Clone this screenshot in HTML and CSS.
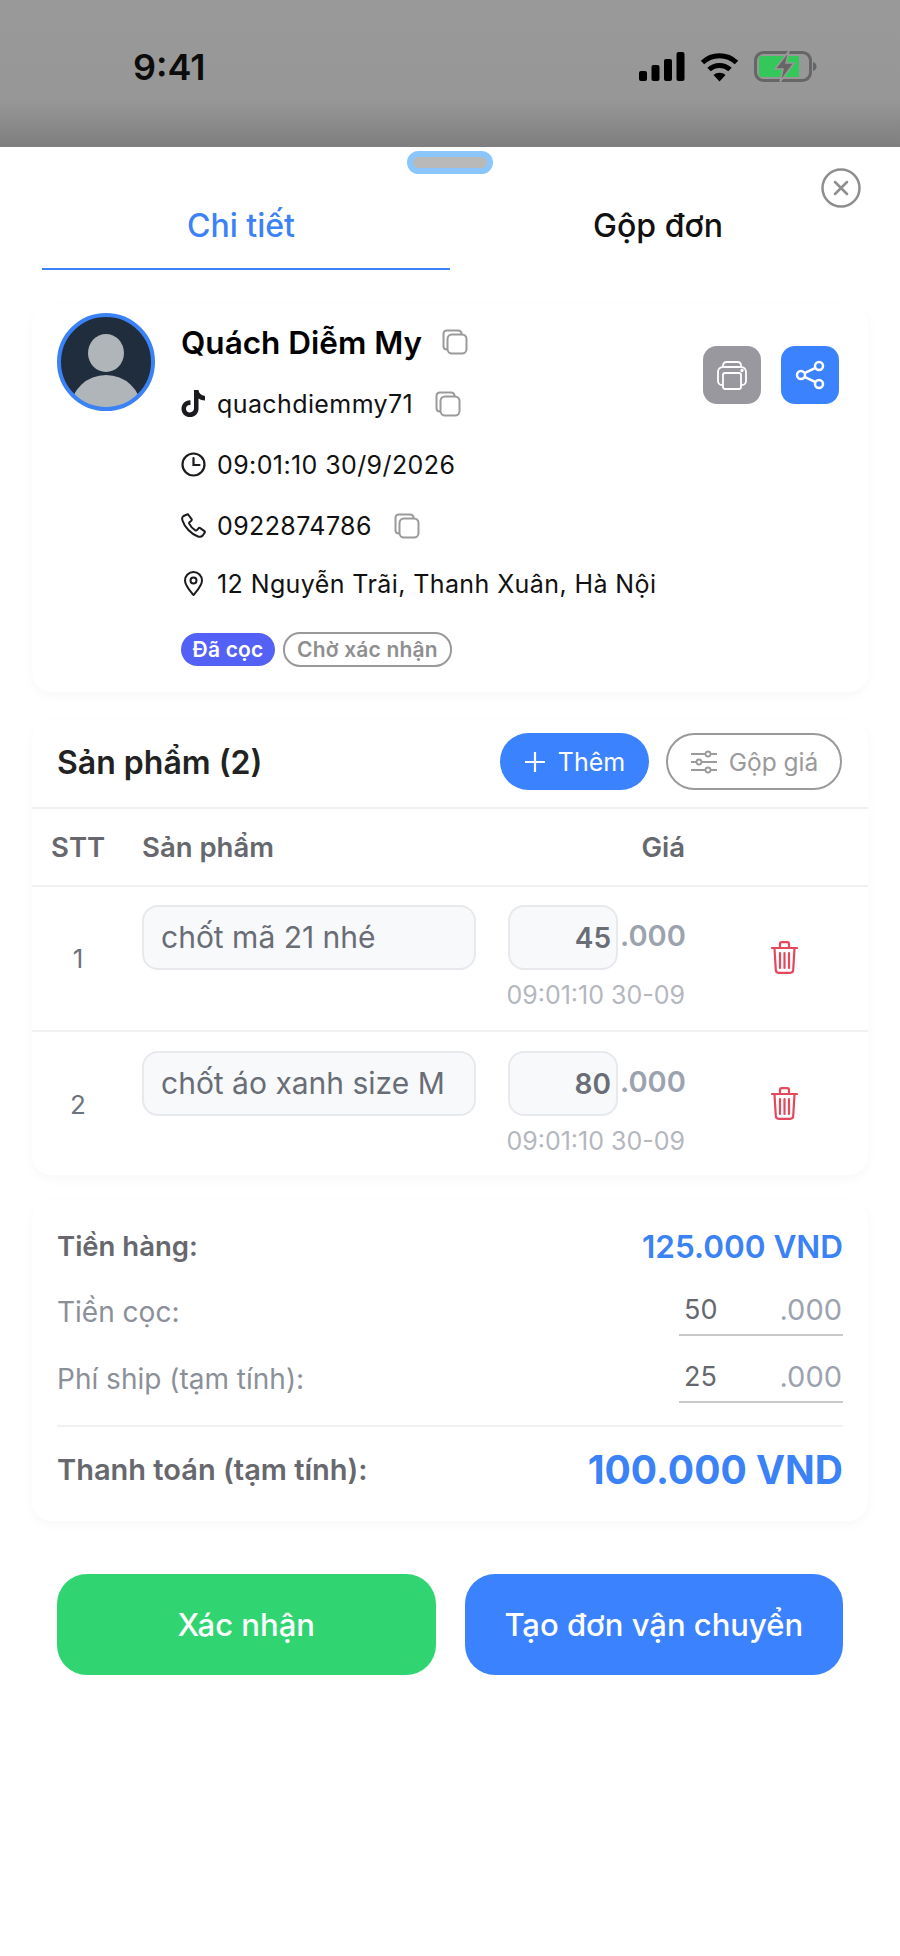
FILE: index.html
```html
<!DOCTYPE html>
<html lang="vi">
<head>
    <meta charset="UTF-8">
    <meta name="viewport" content="width=device-width, initial-scale=1.0">
    <title>Chi tiết đơn</title>
    <link rel="stylesheet" href="styles.css">
</head>

<body>
    <svg class="defs" width="0" height="0">
        <symbol id="copy" viewBox="0 0 26 26">
            <path d="M5 20.5c-2 0-3.500-1.500-3.500-3.500V5C1.500 3 3 1.500 5 1.500h11c2 0 3.500 1.500 3.500 3.500" fill="none" stroke="currentColor" stroke-width="2"/>
            <rect x="5.500" y="5.500" width="19" height="19" rx="4.500" fill="#fff" stroke="currentColor" stroke-width="2"/>
        </symbol>
        <symbol id="trash" viewBox="0 0 27 33">
            <path d="M1 7h25M9 6.500V3c0-1 .8-1.800 1.800-1.800h5.400C17.200 1.200 18 2 18 3v3.500M3.500 7.500l1.300 21.500c.1 1.700 1.300 2.800 3 2.800h11.400c1.700 0 2.900-1.100 3-2.800l1.300-21.500M9 12v15M13.500 12v15M18 12v15" fill="none" stroke="currentColor" stroke-width="2.200" stroke-linecap="round"/>
        </symbol>
    </svg>

    <div class="status_bar">
        <span class="clock">9:41</span>
        <div class="status_icons">
            <svg width="46" height="29" viewBox="0 0 46 29" fill="#000">
                <rect x="0" y="19" width="8" height="10" rx="2"/>
                <rect x="12.500" y="13" width="8" height="16" rx="2"/>
                <rect x="25" y="7" width="8" height="22" rx="2"/>
                <rect x="37.500" y="0" width="8" height="29" rx="2"/>
            </svg>
            <svg width="39" height="30" viewBox="0 0 39 30" fill="none" stroke="#000" stroke-width="5">
                <path d="M2.500 10.500c9.500-9 24.500-9 34 0"/>
                <path d="M9 17.500c6-5.500 15-5.500 21 0"/>
                <path d="M19.500 29.500l-6-6.500c3.400-3 8.600-3 12 0z" fill="#000" stroke="none"/>
            </svg>
            <svg width="63" height="31" viewBox="0 0 63 31">
                <rect x="1.500" y="1.500" width="55" height="28" rx="8" fill="none" stroke="#666" stroke-width="3"/>
                <path d="M8 5h37v21H8a3 3 0 0 1-3-3V8a3 3 0 0 1 3-3z" fill="#34c759"/>
                <path d="M59 11c2.500.5 3.500 2.500 3.500 4.500S61.500 19.500 59 20z" fill="#666"/>
                <path d="M35 0L21 18h8l-3 13 14-19h-8z" fill="#666" stroke="#999" stroke-width="1.500"/>
            </svg>
        </div>
    </div>

    <div class="sheet">
        <div class="handle"></div>
        <svg class="close_btn" width="40" height="40" viewBox="0 0 40 40" fill="none" stroke="#8e8e8e" stroke-width="2.500">
            <circle cx="20" cy="20" r="18.500"/>
            <path d="M14 14l12 12M26 14L14 26" stroke-linecap="round"/>
        </svg>

        <div class="tabs">
            <div class="tab active">Chi tiết</div>
            <div class="tab">Gộp đơn</div>
        </div>

        <div class="card customer">
            <svg class="avatar" width="98" height="98" viewBox="0 0 98 98">
                <clipPath id="avatarClip"><circle cx="49" cy="49" r="47"/></clipPath>
                <circle cx="49" cy="49" r="47" fill="#1f2d3d"/>
                <g clip-path="url(#avatarClip)" fill="#b0b5ba">
                    <ellipse cx="49" cy="40" rx="18" ry="19"/>
                    <ellipse cx="49" cy="95" rx="35" ry="33"/>
                </g>
                <circle cx="49" cy="49" r="47" fill="none" stroke="#3b82f6" stroke-width="4"/>
            </svg>

            <div class="info">
                <div class="info_row name_row">
                    <span class="name">Quách Diễm My</span>
                    <svg class="copy name_copy" width="26" height="26"><use href="#copy"/></svg>
                </div>
                <div class="info_row">
                    <svg class="ico" width="25" height="27" viewBox="0 0 25 27" fill="#1b1b1f">
                        <path d="M13 0h4.500c.3 3.300 2.500 5.600 6.500 6v4.500c-2.500 0-4.800-.7-6.500-2v10.200C17.500 23.400 13.800 27 9 27S.5 23.400.5 18.700 4.500 10 9.500 10.400v4.700c-2.600-.4-4.500 1.300-4.500 3.600 0 2.100 1.700 3.800 3.900 3.800S13 20.800 13 18.600z"/>
                    </svg>
                    <span>quachdiemmy71</span>
                    <svg class="copy" width="26" height="26"><use href="#copy"/></svg>
                </div>
                <div class="info_row">
                    <svg class="ico" width="25" height="25" viewBox="0 0 25 25" fill="none" stroke="#1b1b1f" stroke-width="2.200">
                        <circle cx="12.500" cy="12.500" r="11"/>
                        <path d="M12.500 6v7h6" stroke-linecap="round"/>
                    </svg>
                    <span>09:01:10 30/9/2026</span>
                </div>
                <div class="info_row">
                    <svg class="ico" width="25" height="25" viewBox="0 0 25 25" fill="none" stroke="#1b1b1f" stroke-width="2">
                        <path d="M6 1.500L2.500 3C1 4 .8 5.500 1.500 7.500 3.500 14 10 21 17 23.500c2 .7 3.600.3 4.700-1l2-2.800c.3-.6.2-1.200-.3-1.600l-4.200-3c-.6-.4-1.200-.3-1.700.2l-1.600 1.800c-.4.400-1 .5-1.500.2-2.500-1.400-5-4-6.200-6.600-.2-.5-.1-1 .3-1.400l1.800-1.500c.5-.5.600-1.100.3-1.700L7.500 2c-.3-.6-.9-.8-1.500-.5z" stroke-linejoin="round"/>
                    </svg>
                    <span>0922874786</span>
                    <svg class="copy" width="26" height="26"><use href="#copy"/></svg>
                </div>
                <div class="info_row">
                    <svg class="ico" width="25" height="25" viewBox="0 0 25 25" fill="none" stroke="#1b1b1f" stroke-width="2">
                        <path d="M12.500 24C8 18.500 4 14.500 4 9.500a8.500 8.500 0 0 1 17 0c0 5-4 9-8.500 14.500z" stroke-linejoin="round"/>
                        <circle cx="12.500" cy="9.500" r="3"/>
                    </svg>
                    <span>12 Nguyễn Trãi, Thanh Xuân, Hà Nội</span>
                </div>
                <div class="chips">
                    <span class="chip chip_blue">Đã cọc</span>
                    <span class="chip chip_line">Chờ xác nhận</span>
                </div>
            </div>

            <div class="actions">
                <div class="square_btn grey">
                    <svg width="30" height="29" viewBox="0 0 30 29" fill="none" stroke="#fff" stroke-width="1.800">
                        <path d="M6 6V4.500C6 2.500 7.500 1 9.500 1h11C22.500 1 24 2.500 24 4.500V6"/>
                        <path d="M6 24H5c-2.200 0-4-1.800-4-4v-9c0-2.800 2.200-5 5-5h18c2.800 0 5 2.200 5 5v9c0 2.200-1.800 4-4 4h-1"/>
                        <rect x="6" y="12" width="18" height="16" rx="2"/>
                        <circle cx="25" cy="9.500" r=".8" fill="#fff"/>
                    </svg>
                </div>
                <div class="square_btn blue">
                    <svg width="30" height="30" viewBox="0 0 30 30" fill="none" stroke="#fff" stroke-width="2.500">
                        <circle cx="24" cy="6" r="4"/>
                        <circle cx="6" cy="15" r="4"/>
                        <circle cx="24" cy="24" r="4"/>
                        <path d="M9.500 13.200l11-5.400M9.500 16.800l11 5.400"/>
                    </svg>
                </div>
            </div>
        </div>

        <div class="card products">
            <div class="products_head">
                <h2>Sản phẩm (2)</h2>
                <div class="head_btns">
                    <div class="pill pill_blue">
                        <svg width="22" height="22" viewBox="0 0 22 22" stroke="#fff" stroke-width="2.200"><path d="M11 1v20M1 11h20"/></svg>
                        Thêm
                    </div>
                    <div class="pill pill_line">
                        <svg width="28" height="24" viewBox="0 0 28 24" fill="#fff" stroke="#9a9a9a" stroke-width="1.800">
                            <path d="M1 4h26M1 12h26M1 20h26"/>
                            <circle cx="18" cy="4" r="2.500"/>
                            <circle cx="9" cy="12" r="2.500"/>
                            <circle cx="18" cy="20" r="2.500"/>
                        </svg>
                        Gộp giá
                    </div>
                </div>
            </div>

            <div class="table_row table_head">
                <span class="col_stt">STT</span>
                <span>Sản phẩm</span>
                <span class="col_price">Giá</span>
            </div>

            <div class="table_row item">
                <span class="col_stt">1</span>
                <div class="text_box">chốt mã 21 nhé</div>
                <div class="price_col">
                    <div class="price_line">
                        <div class="price_box">45</div>
                        <span class="thousand">.000</span>
                    </div>
                    <div class="stamp">09:01:10 30-09</div>
                </div>
                <svg class="trash" width="27" height="33"><use href="#trash"/></svg>
            </div>

            <div class="table_row item">
                <span class="col_stt">2</span>
                <div class="text_box">chốt áo xanh size M</div>
                <div class="price_col">
                    <div class="price_line">
                        <div class="price_box">80</div>
                        <span class="thousand">.000</span>
                    </div>
                    <div class="stamp">09:01:10 30-09</div>
                </div>
                <svg class="trash" width="27" height="33"><use href="#trash"/></svg>
            </div>
        </div>

        <div class="card summary">
            <div class="sum_row goods">
                <span class="sum_bold">Tiền hàng:</span>
                <span class="goods_value">125.000 VND</span>
            </div>
            <div class="sum_row fee">
                <span>Tiền cọc:</span>
                <div class="fee_field"><span class="fee_num">50</span><span>.000</span></div>
            </div>
            <div class="sum_row fee">
                <span>Phí ship (tạm tính):</span>
                <div class="fee_field"><span class="fee_num">25</span><span>.000</span></div>
            </div>
            <div class="sum_row total">
                <span class="sum_bold total_label">Thanh toán (tạm tính):</span>
                <span class="total_value">100.000 VND</span>
            </div>
        </div>

        <div class="bottom_btns">
            <div class="big_btn green">Xác nhận</div>
            <div class="big_btn blue">Tạo đơn vận chuyển</div>
        </div>
    </div>
</body>
</html>
```

FILE: styles.css
```css
* {
    box-sizing: border-box;
}

body {
    margin: 0;
    width: 900px;
    height: 1956px;
    overflow: hidden;
    background-color: #fff;
    font-family: "Inter", "Noto Sans", sans-serif;
    color: #111;
}

.defs {
    position: absolute;
}

/* status bar */
.status_bar {
    height: 147px;
    padding: 51px 83px 0 133px;
    display: flex;
    justify-content: space-between;
    align-items: flex-start;
    background-image: linear-gradient(#999 0, #979797 100px, #7e7e7e 147px);
}

.clock {
    font-size: 36px;
    font-weight: 600;
    line-height: 32px;
    color: #0c0c0c;
}

.status_icons {
    display: flex;
    align-items: center;
    gap: 15px;
}

/* sheet */
.sheet {
    position: relative;
    height: 1809px;
    background-color: #fff;
}

.handle {
    position: absolute;
    top: 4px;
    left: 407px;
    width: 86px;
    height: 23px;
    border: 6px solid #8ac6fb;
    border-radius: 12px;
    background-color: #b9b9b9;
}

.close_btn {
    position: absolute;
    top: 21px;
    left: 821px;
}

.tabs {
    display: grid;
    grid-template-columns: 408px 1fr;
    padding: 0 34px 0 42px;
    height: 123px;
}

.tab {
    padding-top: 59px;
    font-size: 32px;
    font-weight: 500;
    line-height: 40px;
    text-align: center;
}

.tab.active {
    padding-right: 10px;
    color: #3b82f6;
    border-bottom: 2px solid #3b82f6;
}

/* cards */
.card {
    margin: 0 32px;
    border-radius: 20px;
    background-color: #fff;
    box-shadow: 0 4px 12px rgba(0, 0, 0, 0.03);
}

.customer {
    margin-top: 35px;
    height: 387px;
    padding: 8px 29px 0 25px;
    display: flex;
    align-items: flex-start;
}

.info {
    flex: 1;
    margin-left: 26px;
    font-size: 25px;
    letter-spacing: 0.4px;
}

.info_row {
    height: 61px;
    display: flex;
    align-items: center;
    white-space: nowrap;
}

.name_row {
    height: 60px;
    padding-bottom: 2px;
}

.info_row:nth-child(5) {
    height: 55px;
}

.name {
    font-size: 31.500px;
    font-weight: 600;
    letter-spacing: 0;
    color: #000;
}

.ico {
    flex: none;
    margin-right: 11px;
}

.copy {
    margin-left: 22px;
    color: #9a9a9a;
}

.name_copy {
    margin-left: 20px;
}

.chips {
    margin-top: 21px;
    display: flex;
    align-items: center;
    gap: 8px;
}

.chip {
    height: 33px;
    border-radius: 17px;
    font-size: 21px;
    font-weight: 600;
    line-height: 33px;
    letter-spacing: 0.2px;
}

.chip_blue {
    width: 94px;
    color: #fff;
    text-align: center;
    background-color: #5461f6;
}

.chip_line {
    height: 35px;
    padding: 0 12px;
    line-height: 31px;
    color: #8f8f8f;
    border: 2px solid #999;
}

.actions {
    margin-top: 33px;
    display: flex;
    gap: 20px;
}

.square_btn {
    width: 58px;
    height: 58px;
    border-radius: 14px;
    display: flex;
    align-items: center;
    justify-content: center;
}

.square_btn.grey {
    background-color: #98989e;
}

.square_btn.blue {
    background-color: #3b82ff;
}

/* products */
.products {
    margin-top: 28px;
    height: 455px;
}

.products_head {
    height: 89px;
    padding: 13px 26px 0 25px;
    display: flex;
    justify-content: space-between;
    align-items: flex-start;
    border-bottom: 2px solid #f1f1f3;
}

.products_head h2 {
    margin: 0;
    font-size: 32px;
    font-weight: 600;
    line-height: 59px;
    color: #222;
}

.head_btns {
    display: flex;
    gap: 17px;
}

.pill {
    height: 57px;
    border-radius: 29px;
    display: flex;
    align-items: center;
    justify-content: center;
    gap: 12px;
    font-size: 25px;
}

.pill_blue {
    width: 149px;
    color: #fff;
    background-color: #3b82ff;
}

.pill_line {
    width: 176px;
    gap: 11px;
    font-size: 24.500px;
    color: #9a9a9a;
    border: 2px solid #9a9a9a;
}

.table_row {
    display: grid;
    grid-template-columns: 110px 366px 177px 1fr;
    border-bottom: 2px solid #f1f1f3;
}

.table_head {
    height: 78px;
    align-items: center;
    font-size: 27.500px;
    font-weight: 600;
    color: #66686e;
}

.col_stt {
    text-align: left;
    padding-left: 19px;
}

.col_price {
    text-align: right;
    grid-column: 3;
}

.item {
    height: 145px;
    padding-top: 18px;
    font-size: 26px;
    color: #6b7280;
}

.item:last-child {
    height: 143px;
    padding-top: 19px;
    border-bottom: 0;
}

.item .col_stt {
    align-self: center;
    margin-top: -18px;
    padding-left: 0;
    text-align: center;
    margin-right: 18px;
}

.text_box {
    width: 334px;
    height: 65px;
    padding-left: 17px;
    border: 2px solid #e7e9ec;
    border-radius: 16px;
    background-color: #f8f9fb;
    font-size: 30px;
    line-height: 61px;
    color: #696d75;
    white-space: nowrap;
}

.price_col {
    margin-left: -2px;
    width: 179px;
}

.price_line {
    display: flex;
    align-items: flex-start;
    padding-left: 2px;
}

.price_box {
    flex: none;
    width: 110px;
    height: 65px;
    padding-right: 5px;
    border: 2px solid #e7e9ec;
    border-radius: 16px;
    background-color: #f8f9fb;
    font-size: 28px;
    font-weight: 600;
    line-height: 63px;
    text-align: right;
    color: #696d75;
}

.thousand {
    margin-left: 2px;
    font-size: 29px;
    font-weight: 600;
    line-height: 61px;
    color: #9ca3af;
}

.stamp {
    margin-top: 11px;
    font-size: 25px;
    line-height: 28px;
    text-align: right;
    color: #b4b7bd;
    white-space: nowrap;
}

.trash {
    align-self: center;
    margin-top: -20px;
    margin-left: 86px;
    color: #e5485d;
}

/* summary */
.summary {
    margin-top: 25px;
    height: 321px;
    padding: 22px 25px 0 25px;
    font-size: 28px;
    color: #8b9098;
}

.sum_row {
    display: flex;
    justify-content: space-between;
    align-items: center;
    white-space: nowrap;
}

.goods {
    height: 48px;
}

.sum_bold {
    font-size: 27.500px;
    font-weight: 600;
    color: #66686e;
}

.total_label {
    font-size: 29px;
}

.goods_value {
    font-size: 31.500px;
    font-weight: 600;
    color: #3b82f6;
}

.fee {
    height: 48px;
    margin-top: 18px;
}

.fee + .fee {
    margin-top: 19px;
}

.fee_field {
    width: 164px;
    height: 48px;
    padding: 0 1px 0 5px;
    display: flex;
    justify-content: space-between;
    font-size: 29px;
    line-height: 44px;
    color: #9ca3af;
    border-bottom: 2px solid #c9c9cb;
}

.fee_num {
    font-size: 27px;
    color: #66686e;
}

.total {
    margin-top: 22px;
    height: 86px;
    border-top: 2px solid #f1f1f3;
}

.total_value {
    font-size: 39px;
    font-weight: 700;
    color: #3b82f6;
}

/* buttons */
.bottom_btns {
    margin: 53px 57px 0;
    display: flex;
    gap: 29px;
}

.big_btn {
    flex: 1;
    height: 101px;
    border-radius: 30px;
    font-size: 31px;
    font-weight: 450;
    line-height: 101px;
    text-align: center;
    color: #fff;
    white-space: nowrap;
}

.big_btn.green {
    background-color: #30d572;
}

.big_btn.blue {
    background-color: #3b82ff;
}
```
